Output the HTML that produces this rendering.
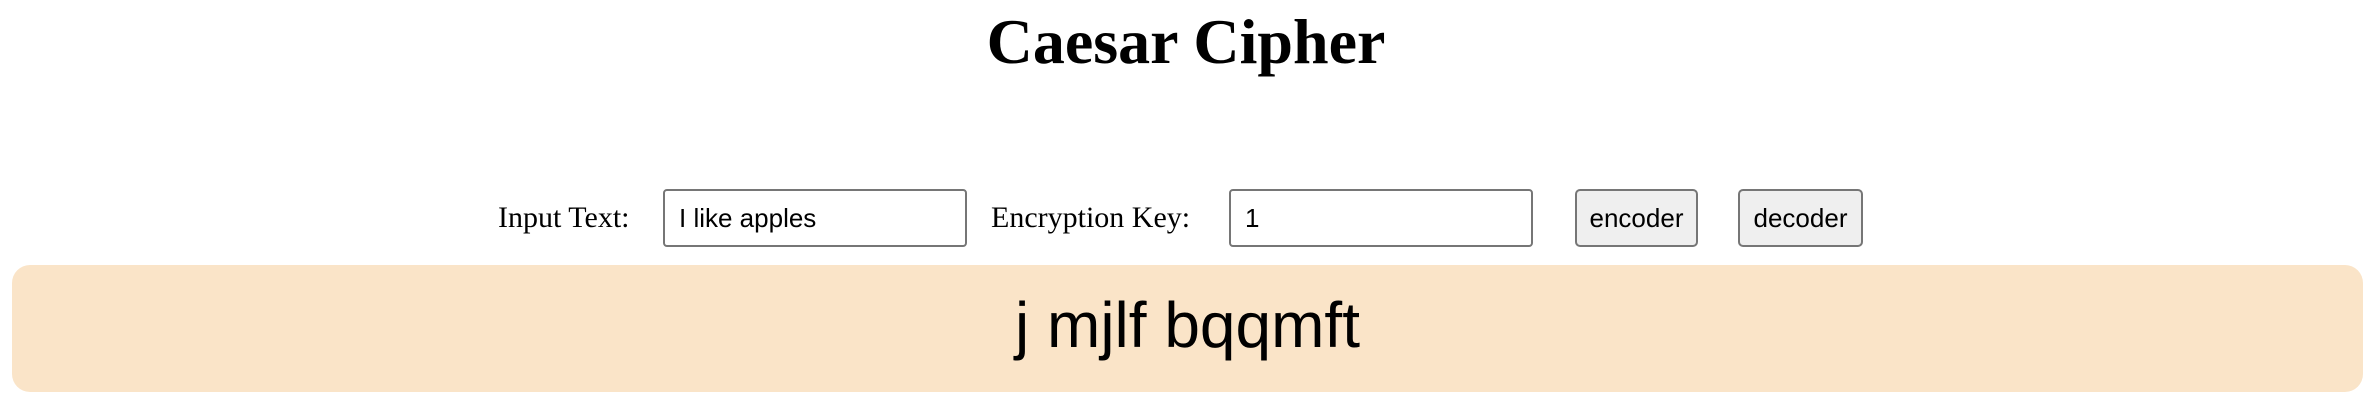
<!DOCTYPE html>
<html><head><style>
body{margin:0;width:2372px;height:420px;background:#fff;position:relative;overflow:hidden}
.a{position:absolute}
h1{position:absolute;left:0;width:2372px;margin:0;text-align:center;font:bold 64px "Liberation Serif",serif;line-height:80px;top:2px}
.lbl{font:30px "Liberation Serif",serif;line-height:58px;top:189px}
.box{top:189px;height:58px;box-sizing:border-box;border:2px solid #767676;border-radius:4px;background:#fff;font:26px "Liberation Sans",sans-serif;line-height:54px;padding-left:14px}
.btn{top:189px;height:58px;box-sizing:border-box;border:2px solid #767676;border-radius:5px;background:#efefef;font:26px "Liberation Sans",sans-serif;line-height:54px;text-align:center}
.out{left:12px;top:265px;width:2351px;height:127px;background:#fae4c8;border-radius:18px;text-align:center;font:64px "Liberation Sans",sans-serif;line-height:120px}
</style></head><body>
<h1>Caesar Cipher</h1>
<div class="a lbl" style="left:498px">Input Text:</div>
<div class="a box" style="left:663px;width:304px">I like apples</div>
<div class="a lbl" style="left:991px">Encryption Key:</div>
<div class="a box" style="left:1229px;width:304px">1</div>
<div class="a btn" style="left:1575px;width:123px">encoder</div>
<div class="a btn" style="left:1738px;width:125px">decoder</div>
<div class="a out">j mjlf bqqmft</div>
</body></html>
